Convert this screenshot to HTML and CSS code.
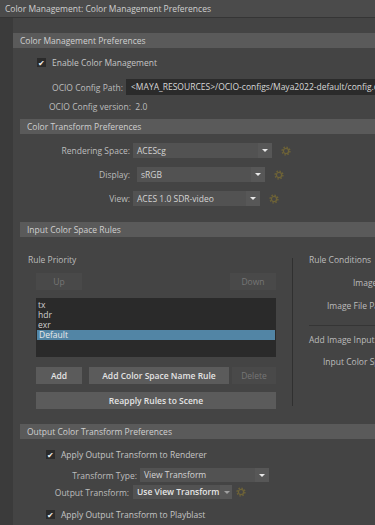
FILE: index.html
```html
<!DOCTYPE html>
<html lang="en">
<head>
    <meta charset="UTF-8">
    <title>Color Management Preferences</title>
    <link rel="stylesheet" href="styles.css">
</head>
<body>
    <div class="titlebar">Color Management: Color Management Preferences</div>

    <div class="panel">
        <div class="frame-head">Color Management Preferences</div>
        <div class="cm-body">
            <div class="check-row enable"><span class="box">&#10004;</span>Enable Color Management</div>
            <div class="row path-row">
                <span class="lbl">OCIO Config Path:</span>
                <span class="field">&lt;MAYA_RESOURCES&gt;/OCIO-configs/Maya2022-default/config.ocio</span>
            </div>
            <div class="version">OCIO Config version:&nbsp; 2.0</div>
        </div>

        <div class="frame">
            <div class="frame-head">Color Transform Preferences</div>
            <div class="ct-body">
                <div class="row sel-row">
                    <span class="lbl">Rendering Space:</span>
                    <span class="select s-render"><span class="sel-text">ACEScg</span><span class="arrow"></span></span>
                    <svg class="gear" viewBox="0 0 10 10"><circle class="teeth" cx="5" cy="5" r="3.9"/><circle cx="5" cy="5" r="2.6"/></svg>
                </div>
                <div class="row sel-row">
                    <span class="lbl">Display:</span>
                    <span class="select s-display"><span class="sel-text">sRGB</span><span class="arrow"></span></span>
                    <svg class="gear" viewBox="0 0 10 10"><circle class="teeth" cx="5" cy="5" r="3.9"/><circle cx="5" cy="5" r="2.6"/></svg>
                </div>
                <div class="row sel-row">
                    <span class="lbl">View:</span>
                    <span class="select s-view"><span class="sel-text">ACES 1.0 SDR-video</span><span class="arrow"></span></span>
                    <svg class="gear" viewBox="0 0 10 10"><circle class="teeth" cx="5" cy="5" r="3.9"/><circle cx="5" cy="5" r="2.6"/></svg>
                </div>
            </div>
        </div>

        <div class="frame">
            <div class="frame-head">Input Color Space Rules</div>
            <div class="rules">
                <div class="rules-left">
                    <div class="small-title">Rule Priority</div>
                    <div class="btn-row updown">
                        <span class="btn off">Up</span>
                        <span class="btn off">Down</span>
                    </div>
                    <div class="listbox">
                        <div class="item">tx</div>
                        <div class="item">hdr</div>
                        <div class="item">exr</div>
                        <div class="item picked">Default</div>
                    </div>
                    <div class="btn-row adds">
                        <span class="btn b-add">Add</span>
                        <span class="btn b-name">Add Color Space Name Rule</span>
                        <span class="btn off b-del">Delete</span>
                    </div>
                    <span class="btn b-reapply">Reapply Rules to Scene</span>
                </div>
                <div class="rules-right">
                    <div class="small-title">Rule Conditions</div>
                    <div class="cond c1">Image Name:</div>
                    <div class="cond c2">Image File Pattern:</div>
                    <div class="hline"></div>
                    <div class="small-title add-input">Add Image Input Color Space</div>
                    <div class="cond c3">Input Color Space:</div>
                </div>
            </div>
        </div>

        <div class="frame">
            <div class="frame-head">Output Color Transform Preferences</div>
            <div class="out-body">
                <div class="check-row"><span class="box">&#10004;</span>Apply Output Transform to Renderer</div>
                <div class="row sel-row out-type">
                    <span class="lbl">Transform Type:</span>
                    <span class="select s-type"><span class="sel-text">View Transform</span><span class="arrow"></span></span>
                </div>
                <div class="row sel-row out-tr">
                    <span class="lbl">Output Transform:</span>
                    <span class="select s-out"><span class="sel-text strong">Use View Transform</span><span class="arrow dim"></span></span>
                    <svg class="gear" viewBox="0 0 10 10"><circle class="teeth" cx="5" cy="5" r="3.9"/><circle cx="5" cy="5" r="2.6"/></svg>
                </div>
                <div class="check-row playblast"><span class="box">&#10004;</span>Apply Output Transform to Playblast</div>
            </div>
        </div>
    </div>
</body>
</html>
```

FILE: styles.css
```css
body {
    margin: 0;
    width: 375px;
    height: 525px;
    overflow: hidden;
    background-color: #3b3b3b;
    font-family: "Open Sans", "Noto Sans", sans-serif;
    font-size: 8.5px;
    color: #bdbdbd;
}

.titlebar {
    height: 17px;
    line-height: 17px;
    padding-left: 5px;
    background-color: #4b4b4b;
    border-bottom: 1px solid #353535;
    color: #cfcfcf;
    white-space: nowrap;
}

.panel {
    margin-left: 13px;
    padding-top: 15px;
    background-color: #444444;
    height: 507px;
    box-sizing: border-box;
    overflow: hidden;
}

.frame {
    margin-left: 7px;
}

.frame-head {
    height: 15px;
    line-height: 15px;
    padding-left: 7px;
    background-color: #5a5a5a;
    color: #d0d0d0;
    white-space: nowrap;
}

.row {
    display: flex;
    align-items: center;
    white-space: nowrap;
}

.lbl {
    text-align: right;
    flex-shrink: 0;
}

/* checkboxes */
.check-row {
    display: flex;
    align-items: center;
    height: 9px;
    white-space: nowrap;
    color: #c4c4c4;
}
.box {
    width: 9px;
    height: 9px;
    margin-right: 6px;
    background-color: #2b2b2b;
    color: #f2f2f2;
    font-size: 8px;
    line-height: 9px;
    text-align: center;
    flex-shrink: 0;
}

/* color management */
.cm-body {
    padding: 10px 0 6px 24px;
}
.path-row {
    margin-top: 12px;
    margin-left: -24px;
}
.path-row .lbl {
    width: 110px;
}
.path-row .field {
    margin-left: 3px;
    height: 16px;
    line-height: 16px;
    padding-left: 5px;
    flex: 1;
    background-color: #2b2b2b;
    color: #d8d8d8;
    overflow: hidden;
}
.version {
    margin-top: 6px;
    margin-left: 12px;
    height: 12px;
    line-height: 12px;
}

/* dropdowns */
.ct-body {
    padding: 9px 0 16px 0;
    display: flex;
    flex-direction: column;
    gap: 9px;
}
.sel-row {
    height: 15px;
}
.sel-row .lbl {
    width: 110px;
}
.select {
    display: flex;
    height: 15px;
    margin-left: 3px;
    background-color: #525252;
}
.sel-text {
    flex: 1;
    padding-left: 4px;
    line-height: 15px;
    color: #d4d4d4;
}
.sel-text.strong {
    color: #e6e6e6;
    font-weight: 600;
}
.arrow {
    width: 14px;
    margin-left: 1px;
    background-color: #575757;
    position: relative;
}
.arrow::after {
    content: "";
    position: absolute;
    left: 4px;
    top: 6px;
    border-left: 3px solid transparent;
    border-right: 3px solid transparent;
    border-top: 3px solid #e8e8e8;
}
.arrow.dim::after {
    border-top-color: #a0a0a0;
}
.s-render { width: 139px; }
.s-display { width: 128px; margin-left: 7px; }
.s-view { width: 127px; }
.gear {
    width: 10px;
    height: 10px;
    margin-left: 9px;
    fill: none;
    stroke: #6e6337;
    stroke-width: 1.3;
}
.gear .teeth {
    stroke-width: 1.4;
    stroke-dasharray: 1.5 1.56;
}

/* input rules */
.rules {
    display: flex;
    padding-top: 17px;
    height: 170px;
}
.rules-left {
    width: 273px;
    padding-left: 8px;
    box-sizing: border-box;
    border-right: 1px solid #303030;
    height: 148px;
    margin-top: 4px;
    padding-top: 0;
}
.rules-left .small-title {
    margin-top: -4px;
}
.small-title {
    height: 12px;
    line-height: 12px;
    white-space: nowrap;
    color: #bcbcbc;
}
.btn-row {
    display: flex;
    width: 240px;
    margin-left: 8px;
}
.updown {
    margin-top: 7px;
    justify-content: space-between;
}
.btn {
    display: block;
    height: 17px;
    line-height: 17px;
    width: 46px;
    text-align: center;
    background-color: #5b5b5b;
    color: #e4e4e4;
    font-weight: 600;
    white-space: nowrap;
}
.btn.off {
    background-color: #494949;
    color: #767676;
    font-weight: normal;
}
.listbox {
    margin: 8px 0 0 8px;
    width: 240px;
    height: 59px;
    padding-top: 2px;
    box-sizing: border-box;
    background-color: #2a2a2a;
}
.item {
    height: 10px;
    line-height: 10px;
    padding-left: 2px;
    color: #d0d0d0;
}
.item.picked {
    background-color: #5285a5;
    color: #eaeaea;
    margin: 0 1px;
}
.adds {
    margin-top: 10px;
}
.b-name {
    width: 140px;
    margin-left: 7px;
}
.b-del {
    width: 44px;
    margin-left: 3px;
}
.b-reapply {
    width: 240px;
    margin: 8px 0 0 8px;
}
.rules-right {
    padding-left: 16px;
    flex: 1;
    overflow: hidden;
    white-space: nowrap;
}
.cond {
    height: 12px;
    line-height: 12px;
    color: #bcbcbc;
}
.c1 { margin-top: 11px; padding-left: 44px; }
.c2 { margin-top: 11px; padding-left: 18px; }
.hline {
    margin-top: 13px;
    height: 1px;
    width: 200px;
    background-color: #353535;
}
.add-input {
    margin-top: 8px;
}
.c3 { margin-top: 10px; padding-left: 14px; }

/* output transform */
.out-body {
    padding: 11px 0 0 26px;
}
.out-type {
    margin-top: 9px;
    height: 14px;
    margin-left: -26px;
}
.out-type .lbl { width: 117px; }
.s-type { width: 129px; height: 14px; }
.s-type .sel-text { line-height: 14px; }
.out-tr {
    margin-top: 3px;
    height: 14px;
    margin-left: -26px;
}
.out-tr .lbl { width: 109px; }
.s-out { width: 99px; height: 14px; margin-left: 4px; }
.s-out .sel-text { line-height: 14px; }
.out-tr .gear { margin-left: 4px; }
.playblast {
    margin-top: 11px;
}
```
